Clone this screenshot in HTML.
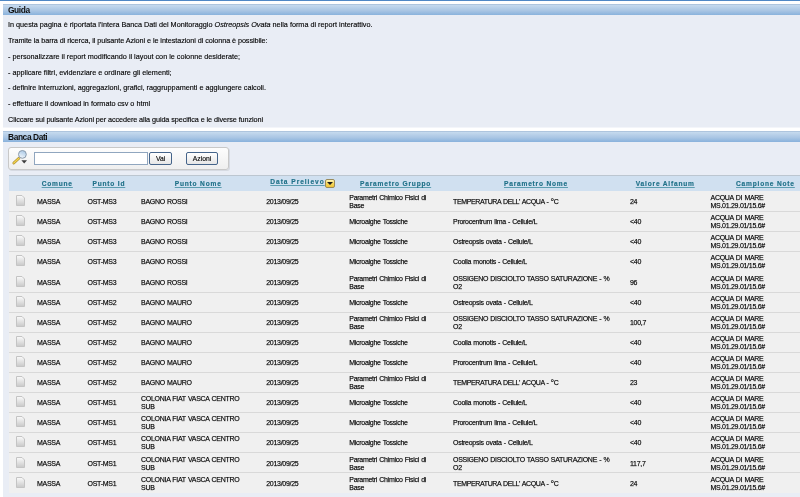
<!DOCTYPE html>
<html><head><meta charset="utf-8">
<style>
*{margin:0;padding:0;box-sizing:border-box}
html,body{width:800px;height:497px;overflow:hidden;background:#fff;-webkit-font-smoothing:antialiased;font-family:"Liberation Sans",sans-serif;color:#222;position:relative}
div,span{position:absolute;white-space:nowrap}
.topline{left:0;top:0;width:800px;height:1px;background:#4f87c4}
.bar{left:3px;width:797px;height:11px;border-top:1px solid #aec5de;background:linear-gradient(#c6daee,#aac6e4 55%,#89b2dc);font-weight:bold;font-size:8.4px;letter-spacing:-0.4px;line-height:10px;padding-left:5px;color:#111}
.content{left:3px;width:797px;background:#e9edf5}
.g{left:8px;font-size:7.25px;line-height:9px;color:#000;-webkit-text-stroke:0.2px rgba(0,0,0,0.6)}
.search{left:8px;top:146.5px;width:221px;height:23px;border:1px solid #c8c8c8;border-radius:3px;background:linear-gradient(#fdfdfd,#efefef);box-shadow:1px 1px 0 #d6dae2}
.inp{left:34px;top:152px;width:114px;height:13px;border:1px solid #90a6bf;background:#fff}
.btn{top:152.25px;height:12.5px;border:1px solid #45648a;border-radius:2px;background:linear-gradient(#ffffff,#e6e6e6);font-size:6.8px;line-height:12px;text-align:center;color:#000;-webkit-text-stroke:0.2px rgba(0,0,0,0.6)}
.thead{left:9px;top:175px;width:791px;height:16px;background:#d0e0f0;border-top:1px solid #bcc6d0}
.th{top:0;height:15px;font-size:6.6px;font-weight:bold;color:#1f7088;-webkit-text-stroke:0.15px #1f7088;letter-spacing:0.8px;text-decoration:underline;text-decoration-color:#5c9db0;line-height:16.5px;text-align:center}
.row{left:9px;width:791px;background:#f0f0f0}
.sep{left:9px;width:791px;height:1px;background:#d9d9d9}
.ws0{position:static;letter-spacing:-0.37px}
.deg{position:static;font-size:9px;line-height:0;vertical-align:-1px}
.c{font-size:7px;letter-spacing:-0.28px;word-spacing:0.5px;line-height:8px;color:#000;-webkit-text-stroke:0.25px rgba(0,0,0,0.6)}

.sort{position:absolute;display:block;width:9.5px;height:8.7px;background:linear-gradient(#fff6b8,#f6d85a 50%,#f0c53a);border:1px solid #9a8a5a;border-radius:2px}
.sort:after{content:"";position:absolute;left:0.6px;top:1.8px;border-left:3.3px solid transparent;border-right:3.3px solid transparent;border-top:3.4px solid #1a1a1a}
</style></head><body>
<div id="root" style="position:absolute;left:0;top:0;width:800px;height:497px;will-change:transform">
<div class="topline"></div>
<div class="bar" style="top:4px">Guida</div>
<div class="content" style="top:15px;height:112px"></div>
<div style="left:3px;top:127px;width:797px;height:1px;background:#f3f5fa"></div>
<div class="g" style="top:20.0px">In questa pagina è riportata l'intera Banca Dati del Monitoraggio <i>Ostreopsis Ovata</i> nella forma di report interattivo.</div>
<div class="g" style="top:35.85px;letter-spacing:-0.07px">Tramite la barra di ricerca, il pulsante Azioni e le intestazioni di colonna è possibile:</div>
<div class="g" style="top:51.7px">- personalizzare il report modificando il layout con le colonne desiderate;</div>
<div class="g" style="top:67.55px">- applicare filtri, evidenziare e ordinare gli elementi;</div>
<div class="g" style="top:83.4px">- definire interruzioni, aggregazioni, grafici, raggruppamenti e aggiungere calcoli.</div>
<div class="g" style="top:99.25px">- effettuare il download in formato csv o html</div>
<div class="g" style="top:115.1px;letter-spacing:-0.083px">Cliccare sul pulsante Azioni per accedere alla guida specifica e le diverse funzioni</div>
<div class="bar" style="top:131px">Banca Dati</div>
<div class="content" style="top:142px;height:355px"></div>
<div class="search"></div>
<svg style="position:absolute;left:11px;top:148px" width="20" height="18" viewBox="0 0 20 18">
 <defs><linearGradient id="lens" x1="0.7" y1="0" x2="0.3" y2="1"><stop offset="0" stop-color="#a8c8e6"/><stop offset="1" stop-color="#f4f8fc"/></linearGradient></defs>
 <line x1="2.8" y1="15.0" x2="7.9" y2="10.3" stroke="#a88a2c" stroke-width="2.7" stroke-linecap="round"/>
 <line x1="2.8" y1="15.0" x2="7.9" y2="10.3" stroke="#f3d34e" stroke-width="1.5" stroke-linecap="round"/>
 <circle cx="11.4" cy="6.4" r="3.9" fill="url(#lens)" stroke="#8a9aab" stroke-width="1"/>
 <path d="M10.4 12.2 L16 12.2 L13.2 15.4 Z" fill="#3e3e3e"/>
</svg>
<div class="inp"></div>
<div class="btn" style="left:149.4px;width:22.3px">Vai</div>
<div class="btn" style="left:186px;width:32px">Azioni</div>
<div class="thead">
<span class="th" style="left:23px;width:50.5px">Comune</span>
<span class="th" style="left:73.5px;width:52.75px">Punto Id</span>
<span class="th" style="left:126.25px;width:125.89999999999998px">Punto Nome</span>
<span class="th" style="left:261.3px;top:-1.8px;text-align:left;letter-spacing:0.97px">Data Prelievo</span>
<b class="sort" style="left:316.1px;top:3.1px"></b>
<span class="th" style="left:334.85px;width:103.54999999999995px">Parametro Gruppo</span>
<span class="th" style="left:438.4px;width:177.20000000000005px">Parametro Nome</span>
<span class="th" style="left:615.6px;width:81.29999999999995px">Valore Alfanum</span>
<span class="th" style="left:696.9px;width:119.10000000000002px">Campione Note</span>
</div>
<div class="row" style="top:191.20px;height:20.09px"></div>
<svg style="position:absolute;left:16px;top:195.04px" width="9" height="11" viewBox="0 0 9 11"><defs><linearGradient id="dg0" x1="0" y1="0" x2="0" y2="1"><stop offset="0" stop-color="#fbfbfb"/><stop offset="1" stop-color="#c8c8c8"/></linearGradient></defs><path d="M0.5 0.5 H6 L8.5 3 V10.5 H0.5 Z" fill="url(#dg0)" stroke="#c4c4c4" stroke-width="1"/></svg>
<span class="c" style="left:37px;top:198.04px">MASSA</span>
<span class="c" style="left:87.5px;top:198.04px">OST-MS3</span>
<span class="c" style="left:141px;top:198.04px">BAGNO ROSSI</span>
<span class="c" style="left:266.25px;top:198.04px">2013/09/25</span>
<span class="c" style="left:349.25px;top:194.04px">Parametri Chimico Fisici di<br>Base</span>
<span class="c" style="left:453px;top:198.04px"><span class="ws0">TEMPERATURA DELL' ACQUA - <span class="deg">°</span>C</span></span>
<span class="c" style="left:630px;top:198.04px">24</span>
<span class="c" style="left:710.5px;top:194.04px">ACQUA DI MARE<br>MS.01.29.01/15.6#</span>
<div class="row" style="top:211.29px;height:20.09px"></div>
<div class="sep" style="top:211px"></div>
<svg style="position:absolute;left:16px;top:215.16px" width="9" height="11" viewBox="0 0 9 11"><defs><linearGradient id="dg1" x1="0" y1="0" x2="0" y2="1"><stop offset="0" stop-color="#fbfbfb"/><stop offset="1" stop-color="#c8c8c8"/></linearGradient></defs><path d="M0.5 0.5 H6 L8.5 3 V10.5 H0.5 Z" fill="url(#dg1)" stroke="#c4c4c4" stroke-width="1"/></svg>
<span class="c" style="left:37px;top:218.16px">MASSA</span>
<span class="c" style="left:87.5px;top:218.16px">OST-MS3</span>
<span class="c" style="left:141px;top:218.16px">BAGNO ROSSI</span>
<span class="c" style="left:266.25px;top:218.16px">2013/09/25</span>
<span class="c" style="left:349.25px;top:218.16px">Microalghe Tossiche</span>
<span class="c" style="left:453px;top:218.16px">Prorocentrum lima - Cellule/L</span>
<span class="c" style="left:630px;top:218.16px">&lt;40</span>
<span class="c" style="left:710.5px;top:214.16px">ACQUA DI MARE<br>MS.01.29.01/15.6#</span>
<div class="row" style="top:231.38px;height:20.09px"></div>
<div class="sep" style="top:231px"></div>
<svg style="position:absolute;left:16px;top:235.28px" width="9" height="11" viewBox="0 0 9 11"><defs><linearGradient id="dg2" x1="0" y1="0" x2="0" y2="1"><stop offset="0" stop-color="#fbfbfb"/><stop offset="1" stop-color="#c8c8c8"/></linearGradient></defs><path d="M0.5 0.5 H6 L8.5 3 V10.5 H0.5 Z" fill="url(#dg2)" stroke="#c4c4c4" stroke-width="1"/></svg>
<span class="c" style="left:37px;top:238.28px">MASSA</span>
<span class="c" style="left:87.5px;top:238.28px">OST-MS3</span>
<span class="c" style="left:141px;top:238.28px">BAGNO ROSSI</span>
<span class="c" style="left:266.25px;top:238.28px">2013/09/25</span>
<span class="c" style="left:349.25px;top:238.28px">Microalghe Tossiche</span>
<span class="c" style="left:453px;top:238.28px">Ostreopsis ovata - Cellule/L</span>
<span class="c" style="left:630px;top:238.28px">&lt;40</span>
<span class="c" style="left:710.5px;top:234.28px">ACQUA DI MARE<br>MS.01.29.01/15.6#</span>
<div class="row" style="top:251.47px;height:20.09px"></div>
<div class="sep" style="top:251px"></div>
<svg style="position:absolute;left:16px;top:255.40px" width="9" height="11" viewBox="0 0 9 11"><defs><linearGradient id="dg3" x1="0" y1="0" x2="0" y2="1"><stop offset="0" stop-color="#fbfbfb"/><stop offset="1" stop-color="#c8c8c8"/></linearGradient></defs><path d="M0.5 0.5 H6 L8.5 3 V10.5 H0.5 Z" fill="url(#dg3)" stroke="#c4c4c4" stroke-width="1"/></svg>
<span class="c" style="left:37px;top:258.40px">MASSA</span>
<span class="c" style="left:87.5px;top:258.40px">OST-MS3</span>
<span class="c" style="left:141px;top:258.40px">BAGNO ROSSI</span>
<span class="c" style="left:266.25px;top:258.40px">2013/09/25</span>
<span class="c" style="left:349.25px;top:258.40px">Microalghe Tossiche</span>
<span class="c" style="left:453px;top:258.40px">Coolia monotis - Cellule/L</span>
<span class="c" style="left:630px;top:258.40px">&lt;40</span>
<span class="c" style="left:710.5px;top:254.40px">ACQUA DI MARE<br>MS.01.29.01/15.6#</span>
<div class="row" style="top:271.56px;height:20.09px"></div>
<svg style="position:absolute;left:16px;top:275.52px" width="9" height="11" viewBox="0 0 9 11"><defs><linearGradient id="dg4" x1="0" y1="0" x2="0" y2="1"><stop offset="0" stop-color="#fbfbfb"/><stop offset="1" stop-color="#c8c8c8"/></linearGradient></defs><path d="M0.5 0.5 H6 L8.5 3 V10.5 H0.5 Z" fill="url(#dg4)" stroke="#c4c4c4" stroke-width="1"/></svg>
<span class="c" style="left:37px;top:278.52px">MASSA</span>
<span class="c" style="left:87.5px;top:278.52px">OST-MS3</span>
<span class="c" style="left:141px;top:278.52px">BAGNO ROSSI</span>
<span class="c" style="left:266.25px;top:278.52px">2013/09/25</span>
<span class="c" style="left:349.25px;top:274.52px">Parametri Chimico Fisici di<br>Base</span>
<span class="c" style="left:453px;top:274.52px">OSSIGENO DISCIOLTO TASSO SATURAZIONE - %<br>O2</span>
<span class="c" style="left:630px;top:278.52px">96</span>
<span class="c" style="left:710.5px;top:274.52px">ACQUA DI MARE<br>MS.01.29.01/15.6#</span>
<div class="row" style="top:291.65px;height:20.09px"></div>
<div class="sep" style="top:292px"></div>
<svg style="position:absolute;left:16px;top:295.64px" width="9" height="11" viewBox="0 0 9 11"><defs><linearGradient id="dg5" x1="0" y1="0" x2="0" y2="1"><stop offset="0" stop-color="#fbfbfb"/><stop offset="1" stop-color="#c8c8c8"/></linearGradient></defs><path d="M0.5 0.5 H6 L8.5 3 V10.5 H0.5 Z" fill="url(#dg5)" stroke="#c4c4c4" stroke-width="1"/></svg>
<span class="c" style="left:37px;top:298.64px">MASSA</span>
<span class="c" style="left:87.5px;top:298.64px">OST-MS2</span>
<span class="c" style="left:141px;top:298.64px">BAGNO MAURO</span>
<span class="c" style="left:266.25px;top:298.64px">2013/09/25</span>
<span class="c" style="left:349.25px;top:298.64px">Microalghe Tossiche</span>
<span class="c" style="left:453px;top:298.64px">Ostreopsis ovata - Cellule/L</span>
<span class="c" style="left:630px;top:298.64px">&lt;40</span>
<span class="c" style="left:710.5px;top:294.64px">ACQUA DI MARE<br>MS.01.29.01/15.6#</span>
<div class="row" style="top:311.74px;height:20.09px"></div>
<div class="sep" style="top:312px"></div>
<svg style="position:absolute;left:16px;top:315.76px" width="9" height="11" viewBox="0 0 9 11"><defs><linearGradient id="dg6" x1="0" y1="0" x2="0" y2="1"><stop offset="0" stop-color="#fbfbfb"/><stop offset="1" stop-color="#c8c8c8"/></linearGradient></defs><path d="M0.5 0.5 H6 L8.5 3 V10.5 H0.5 Z" fill="url(#dg6)" stroke="#c4c4c4" stroke-width="1"/></svg>
<span class="c" style="left:37px;top:318.76px">MASSA</span>
<span class="c" style="left:87.5px;top:318.76px">OST-MS2</span>
<span class="c" style="left:141px;top:318.76px">BAGNO MAURO</span>
<span class="c" style="left:266.25px;top:318.76px">2013/09/25</span>
<span class="c" style="left:349.25px;top:314.76px">Parametri Chimico Fisici di<br>Base</span>
<span class="c" style="left:453px;top:314.76px">OSSIGENO DISCIOLTO TASSO SATURAZIONE - %<br>O2</span>
<span class="c" style="left:630px;top:318.76px">100,7</span>
<span class="c" style="left:710.5px;top:314.76px">ACQUA DI MARE<br>MS.01.29.01/15.6#</span>
<div class="row" style="top:331.83px;height:20.09px"></div>
<div class="sep" style="top:332px"></div>
<svg style="position:absolute;left:16px;top:335.88px" width="9" height="11" viewBox="0 0 9 11"><defs><linearGradient id="dg7" x1="0" y1="0" x2="0" y2="1"><stop offset="0" stop-color="#fbfbfb"/><stop offset="1" stop-color="#c8c8c8"/></linearGradient></defs><path d="M0.5 0.5 H6 L8.5 3 V10.5 H0.5 Z" fill="url(#dg7)" stroke="#c4c4c4" stroke-width="1"/></svg>
<span class="c" style="left:37px;top:338.88px">MASSA</span>
<span class="c" style="left:87.5px;top:338.88px">OST-MS2</span>
<span class="c" style="left:141px;top:338.88px">BAGNO MAURO</span>
<span class="c" style="left:266.25px;top:338.88px">2013/09/25</span>
<span class="c" style="left:349.25px;top:338.88px">Microalghe Tossiche</span>
<span class="c" style="left:453px;top:338.88px">Coolia monotis - Cellule/L</span>
<span class="c" style="left:630px;top:338.88px">&lt;40</span>
<span class="c" style="left:710.5px;top:334.88px">ACQUA DI MARE<br>MS.01.29.01/15.6#</span>
<div class="row" style="top:351.92px;height:20.09px"></div>
<div class="sep" style="top:352px"></div>
<svg style="position:absolute;left:16px;top:356.00px" width="9" height="11" viewBox="0 0 9 11"><defs><linearGradient id="dg8" x1="0" y1="0" x2="0" y2="1"><stop offset="0" stop-color="#fbfbfb"/><stop offset="1" stop-color="#c8c8c8"/></linearGradient></defs><path d="M0.5 0.5 H6 L8.5 3 V10.5 H0.5 Z" fill="url(#dg8)" stroke="#c4c4c4" stroke-width="1"/></svg>
<span class="c" style="left:37px;top:359.00px">MASSA</span>
<span class="c" style="left:87.5px;top:359.00px">OST-MS2</span>
<span class="c" style="left:141px;top:359.00px">BAGNO MAURO</span>
<span class="c" style="left:266.25px;top:359.00px">2013/09/25</span>
<span class="c" style="left:349.25px;top:359.00px">Microalghe Tossiche</span>
<span class="c" style="left:453px;top:359.00px">Prorocentrum lima - Cellule/L</span>
<span class="c" style="left:630px;top:359.00px">&lt;40</span>
<span class="c" style="left:710.5px;top:355.00px">ACQUA DI MARE<br>MS.01.29.01/15.6#</span>
<div class="row" style="top:372.01px;height:20.09px"></div>
<div class="sep" style="top:372px"></div>
<svg style="position:absolute;left:16px;top:376.12px" width="9" height="11" viewBox="0 0 9 11"><defs><linearGradient id="dg9" x1="0" y1="0" x2="0" y2="1"><stop offset="0" stop-color="#fbfbfb"/><stop offset="1" stop-color="#c8c8c8"/></linearGradient></defs><path d="M0.5 0.5 H6 L8.5 3 V10.5 H0.5 Z" fill="url(#dg9)" stroke="#c4c4c4" stroke-width="1"/></svg>
<span class="c" style="left:37px;top:379.12px">MASSA</span>
<span class="c" style="left:87.5px;top:379.12px">OST-MS2</span>
<span class="c" style="left:141px;top:379.12px">BAGNO MAURO</span>
<span class="c" style="left:266.25px;top:379.12px">2013/09/25</span>
<span class="c" style="left:349.25px;top:375.12px">Parametri Chimico Fisici di<br>Base</span>
<span class="c" style="left:453px;top:379.12px"><span class="ws0">TEMPERATURA DELL' ACQUA - <span class="deg">°</span>C</span></span>
<span class="c" style="left:630px;top:379.12px">23</span>
<span class="c" style="left:710.5px;top:375.12px">ACQUA DI MARE<br>MS.01.29.01/15.6#</span>
<div class="row" style="top:392.10px;height:20.09px"></div>
<div class="sep" style="top:392px"></div>
<svg style="position:absolute;left:16px;top:396.25px" width="9" height="11" viewBox="0 0 9 11"><defs><linearGradient id="dg10" x1="0" y1="0" x2="0" y2="1"><stop offset="0" stop-color="#fbfbfb"/><stop offset="1" stop-color="#c8c8c8"/></linearGradient></defs><path d="M0.5 0.5 H6 L8.5 3 V10.5 H0.5 Z" fill="url(#dg10)" stroke="#c4c4c4" stroke-width="1"/></svg>
<span class="c" style="left:37px;top:399.25px">MASSA</span>
<span class="c" style="left:87.5px;top:399.25px">OST-MS1</span>
<span class="c" style="left:141px;top:395.25px">COLONIA FIAT VASCA CENTRO<br>SUB</span>
<span class="c" style="left:266.25px;top:399.25px">2013/09/25</span>
<span class="c" style="left:349.25px;top:399.25px">Microalghe Tossiche</span>
<span class="c" style="left:453px;top:399.25px">Coolia monotis - Cellule/L</span>
<span class="c" style="left:630px;top:399.25px">&lt;40</span>
<span class="c" style="left:710.5px;top:395.25px">ACQUA DI MARE<br>MS.01.29.01/15.6#</span>
<div class="row" style="top:412.19px;height:20.09px"></div>
<div class="sep" style="top:412px"></div>
<svg style="position:absolute;left:16px;top:416.37px" width="9" height="11" viewBox="0 0 9 11"><defs><linearGradient id="dg11" x1="0" y1="0" x2="0" y2="1"><stop offset="0" stop-color="#fbfbfb"/><stop offset="1" stop-color="#c8c8c8"/></linearGradient></defs><path d="M0.5 0.5 H6 L8.5 3 V10.5 H0.5 Z" fill="url(#dg11)" stroke="#c4c4c4" stroke-width="1"/></svg>
<span class="c" style="left:37px;top:419.37px">MASSA</span>
<span class="c" style="left:87.5px;top:419.37px">OST-MS1</span>
<span class="c" style="left:141px;top:415.37px">COLONIA FIAT VASCA CENTRO<br>SUB</span>
<span class="c" style="left:266.25px;top:419.37px">2013/09/25</span>
<span class="c" style="left:349.25px;top:419.37px">Microalghe Tossiche</span>
<span class="c" style="left:453px;top:419.37px">Prorocentrum lima - Cellule/L</span>
<span class="c" style="left:630px;top:419.37px">&lt;40</span>
<span class="c" style="left:710.5px;top:415.37px">ACQUA DI MARE<br>MS.01.29.01/15.6#</span>
<div class="row" style="top:432.28px;height:20.09px"></div>
<div class="sep" style="top:432px"></div>
<svg style="position:absolute;left:16px;top:436.48px" width="9" height="11" viewBox="0 0 9 11"><defs><linearGradient id="dg12" x1="0" y1="0" x2="0" y2="1"><stop offset="0" stop-color="#fbfbfb"/><stop offset="1" stop-color="#c8c8c8"/></linearGradient></defs><path d="M0.5 0.5 H6 L8.5 3 V10.5 H0.5 Z" fill="url(#dg12)" stroke="#c4c4c4" stroke-width="1"/></svg>
<span class="c" style="left:37px;top:439.48px">MASSA</span>
<span class="c" style="left:87.5px;top:439.48px">OST-MS1</span>
<span class="c" style="left:141px;top:435.48px">COLONIA FIAT VASCA CENTRO<br>SUB</span>
<span class="c" style="left:266.25px;top:439.48px">2013/09/25</span>
<span class="c" style="left:349.25px;top:439.48px">Microalghe Tossiche</span>
<span class="c" style="left:453px;top:439.48px">Ostreopsis ovata - Cellule/L</span>
<span class="c" style="left:630px;top:439.48px">&lt;40</span>
<span class="c" style="left:710.5px;top:435.48px">ACQUA DI MARE<br>MS.01.29.01/15.6#</span>
<div class="row" style="top:452.37px;height:20.09px"></div>
<div class="sep" style="top:452px"></div>
<svg style="position:absolute;left:16px;top:456.60px" width="9" height="11" viewBox="0 0 9 11"><defs><linearGradient id="dg13" x1="0" y1="0" x2="0" y2="1"><stop offset="0" stop-color="#fbfbfb"/><stop offset="1" stop-color="#c8c8c8"/></linearGradient></defs><path d="M0.5 0.5 H6 L8.5 3 V10.5 H0.5 Z" fill="url(#dg13)" stroke="#c4c4c4" stroke-width="1"/></svg>
<span class="c" style="left:37px;top:459.60px">MASSA</span>
<span class="c" style="left:87.5px;top:459.60px">OST-MS1</span>
<span class="c" style="left:141px;top:455.60px">COLONIA FIAT VASCA CENTRO<br>SUB</span>
<span class="c" style="left:266.25px;top:459.60px">2013/09/25</span>
<span class="c" style="left:349.25px;top:455.60px">Parametri Chimico Fisici di<br>Base</span>
<span class="c" style="left:453px;top:455.60px">OSSIGENO DISCIOLTO TASSO SATURAZIONE - %<br>O2</span>
<span class="c" style="left:630px;top:459.60px">117,7</span>
<span class="c" style="left:710.5px;top:455.60px">ACQUA DI MARE<br>MS.01.29.01/15.6#</span>
<div class="row" style="top:472.46px;height:20.09px"></div>
<div class="sep" style="top:472px"></div>
<svg style="position:absolute;left:16px;top:476.72px" width="9" height="11" viewBox="0 0 9 11"><defs><linearGradient id="dg14" x1="0" y1="0" x2="0" y2="1"><stop offset="0" stop-color="#fbfbfb"/><stop offset="1" stop-color="#c8c8c8"/></linearGradient></defs><path d="M0.5 0.5 H6 L8.5 3 V10.5 H0.5 Z" fill="url(#dg14)" stroke="#c4c4c4" stroke-width="1"/></svg>
<span class="c" style="left:37px;top:479.72px">MASSA</span>
<span class="c" style="left:87.5px;top:479.72px">OST-MS1</span>
<span class="c" style="left:141px;top:475.72px">COLONIA FIAT VASCA CENTRO<br>SUB</span>
<span class="c" style="left:266.25px;top:479.72px">2013/09/25</span>
<span class="c" style="left:349.25px;top:475.72px">Parametri Chimico Fisici di<br>Base</span>
<span class="c" style="left:453px;top:479.72px"><span class="ws0">TEMPERATURA DELL' ACQUA - <span class="deg">°</span>C</span></span>
<span class="c" style="left:630px;top:479.72px">24</span>
<span class="c" style="left:710.5px;top:475.72px">ACQUA DI MARE<br>MS.01.29.01/15.6#</span>
</div>
</body></html>
